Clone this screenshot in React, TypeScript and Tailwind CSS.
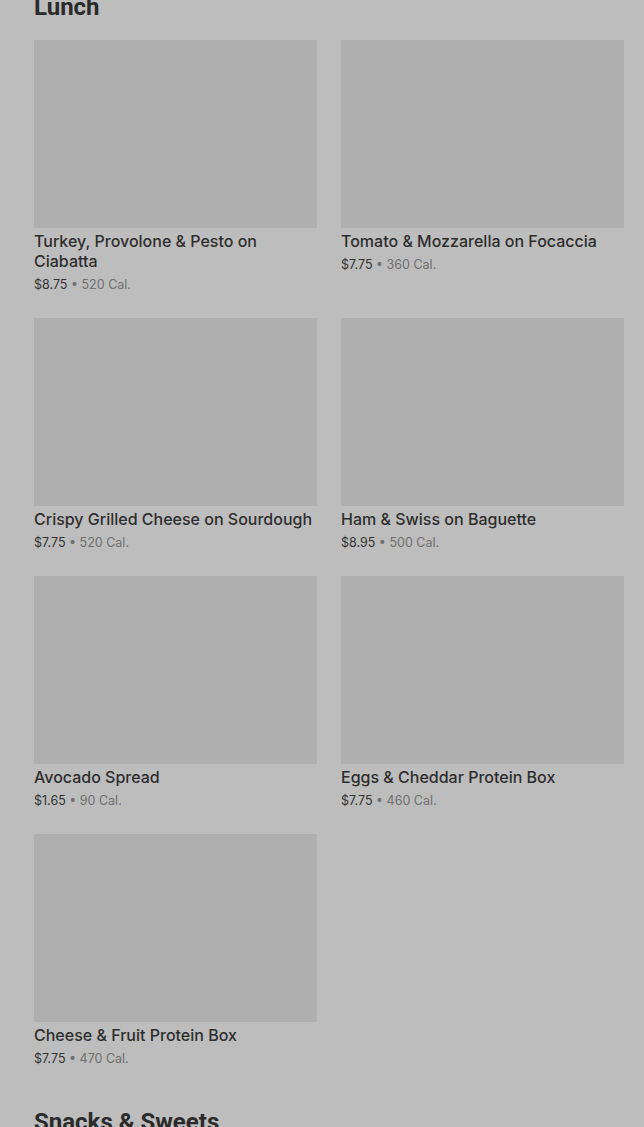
import React from 'react'

type Item = { name: string; price: string; cal: string }

const lunch: Item[] = [
    { name: 'Turkey, Provolone & Pesto on Ciabatta', price: '$8.75', cal: '520 Cal.' },
    { name: 'Tomato & Mozzarella on Focaccia', price: '$7.75', cal: '360 Cal.' },
    { name: 'Crispy Grilled Cheese on Sourdough', price: '$7.75', cal: '520 Cal.' },
    { name: 'Ham & Swiss on Baguette', price: '$8.95', cal: '500 Cal.' },
    { name: 'Avocado Spread', price: '$1.65', cal: '90 Cal.' },
    { name: 'Eggs & Cheddar Protein Box', price: '$7.75', cal: '460 Cal.' },
    { name: 'Cheese & Fruit Protein Box', price: '$7.75', cal: '470 Cal.' },
]

const MenuCard = ({ item }: { item: Item }) => {
    return (
        <div className='flex flex-col'>
            <div className='h-[188px] w-full bg-[#afafaf]'></div>
            <div className='pt-[3px]'>
                <h3 className='text-[16px] leading-[20px] font-medium text-[#2e2e2e]'>{item.name}</h3>
                <p className='text-[12.5px] leading-[20px] mt-[4px]'>
                    <span className='text-[#333333]'>{item.price}</span>
                    <span className='text-[#6f6f6f]'> • {item.cal}</span>
                </p>
            </div>
        </div>
    )
}

export default function App() {
    return (
        <div className='min-h-screen bg-[#bdbdbd] overflow-hidden' style={{ fontFamily: 'Inter, "Noto Sans", sans-serif' }}>
            <div className='pl-[34px] pr-[20px]'>
                <section>
                    <h2 className='mt-[-9px] text-[24px] leading-[32px] font-bold text-[#2b2b2b] font-[Roboto,sans-serif]'>Lunch</h2>
                    <div className='grid grid-cols-2 gap-x-[24px] gap-y-[23px] mt-[17px]'>
                        {lunch.map((item) => (
                            <MenuCard key={item.name} item={item} />
                        ))}
                    </div>
                </section>
                <section className='mt-[37px]'>
                    <h2 className='text-[24px] leading-[32px] font-bold text-[#2b2b2b] font-[Roboto,sans-serif]'>Snacks &amp; Sweets</h2>
                </section>
            </div>
        </div>
    )
}
